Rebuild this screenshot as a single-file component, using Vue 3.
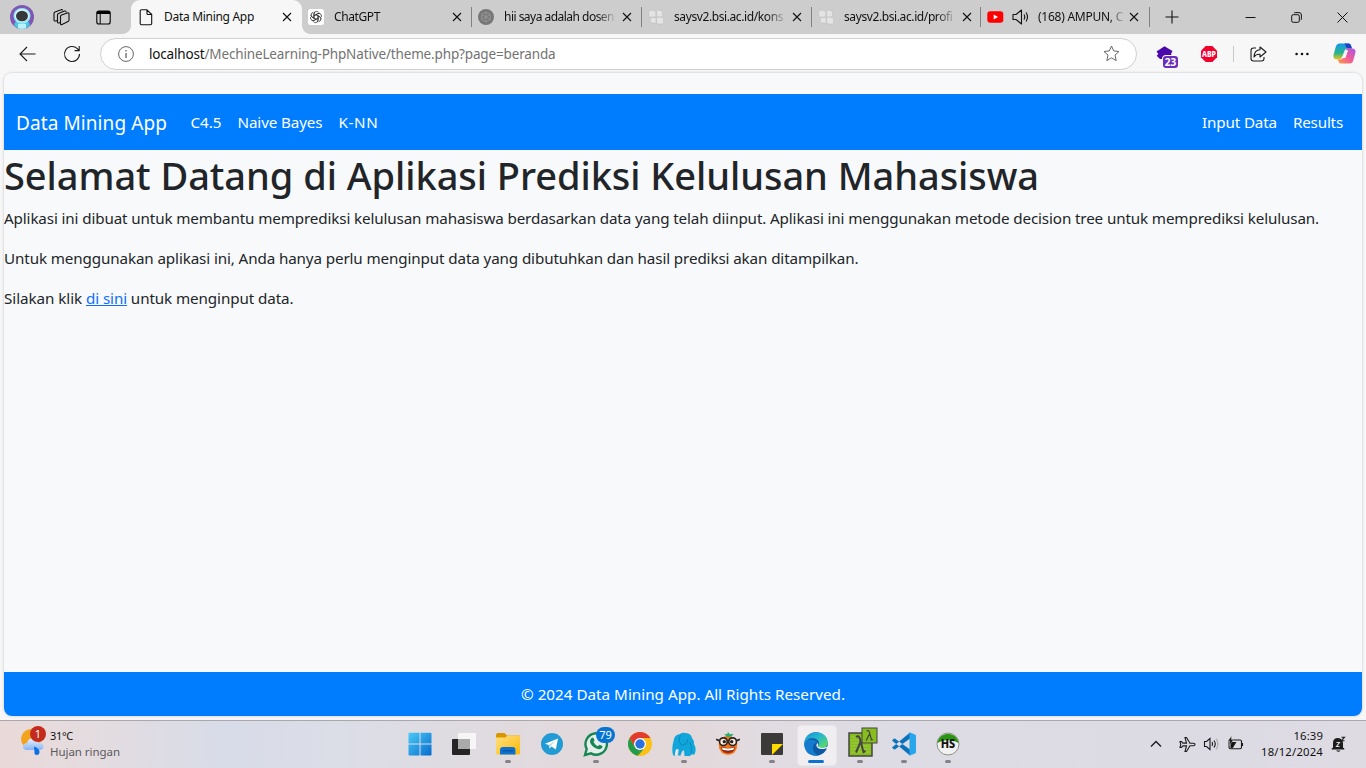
<script setup>
const tabs = [
  { id: 'gpt', title: 'ChatGPT', icon: 'gpt', width: 46 },
  { id: 'hii', title: 'hii saya adalah dosen', icon: 'dot', width: 110 },
  { id: 'kons', title: 'saysv2.bsi.ac.id/kons', icon: 'bsi', width: 109 },
  { id: 'prof', title: 'saysv2.bsi.ac.id/profi', icon: 'bsi', width: 108.5 },
  { id: 'yt', title: '(168) AMPUN, C', icon: 'yt', width: 85 },
]
const apps = [
  { id: 'start' }, { id: 'desktops' }, { id: 'files', run: true }, { id: 'telegram' },
  { id: 'whatsapp', run: true, badge: '79' }, { id: 'chrome' }, { id: 'mamp', run: true },
  { id: 'orange' }, { id: 'notes', run: true }, { id: 'edge', active: true },
  { id: 'cmder', run: true }, { id: 'code', run: true }, { id: 'heidi', run: true },
]

// Distributes letter spacing so that a label occupies the given width.
const vFit = {
  mounted(el, { value }) {
    const now = el.getBoundingClientRect().width
    el.style.letterSpacing = `${(value - now) / el.textContent.length}px`
  },
}
</script>

<template>
  <div class="screen">
    <header class="tabbar">
      <div class="tools">
        <svg class="avatar" width="24" height="24" viewBox="0 0 24 24">
          <circle cx="12" cy="12" r="12" fill="#7e57b5" />
          <path d="M4 20q1-5 8-5t8 5q-3 4-8 4t-8-4z" fill="#4cc3df" />
          <ellipse cx="12" cy="11" rx="8.5" ry="8" fill="#8fe6f5" />
          <ellipse cx="12" cy="10.5" rx="7.3" ry="6.5" fill="#d5f6fb" />
          <ellipse cx="12" cy="11" rx="6" ry="5.2" fill="#37383b" />
          <path d="M8 19h8v4.300q-4 1-8 0z" fill="#b8f2fa" />
        </svg>
        <svg class="i-ws" width="17" height="17" viewBox="0 0 17 17" fill="none" stroke="#111" stroke-width="1.100" stroke-linejoin="round">
          <path d="M8.500 6 14.500 4q1.500-.4 1.500 1v6q0 1-1 1.500l-6 3q-1.500.6-1.500-1V7.500q0-1 1-1.500z" />
          <path d="M7.500 13.500l-1.500.5q-1.500.3-1.500-1V6q0-1 1-1.500L11.500 2q1.500-.4 1.700 1.500" />
          <path d="M4.500 11.500 3 12q-2 .3-2-1V4.500q0-1 1-1.500L8 .8q1-.4 1.700.5" />
        </svg>
        <svg class="i-side" width="15" height="15" viewBox="0 0 15 15" fill="none" stroke="#000" stroke-width="1.100">
          <rect x=".8" y="1" width="13.400" height="13" rx="2" /><path d="M1 2.500h13" stroke-width="3" /><path d="M4.200 4v10" stroke-width="1" />
        </svg>
      </div>
      <div class="tab active">
        <svg class="i-page" width="14" height="17" viewBox="0 0 14 17" fill="none" stroke="#111" stroke-width="1.100" stroke-linejoin="round"><path d="M2.500.8H8l4.700 4.700v9q0 1.200-1.200 1.200h-9Q1.200 15.700 1.200 14.500V2Q1.200.8 2.500.8zM8 1v3.500q0 1 1 1h3.500" /></svg>
        <div class="ttl"><span v-fit="90">Data Mining App</span></div>
        <svg class="x" width="10" height="10" viewBox="0 0 10 10"><path d="M1 1l8 8M9 1 1 9" /></svg>
      </div>
      <div v-for="t in tabs" :key="t.id" class="tab" :class="[t.id, t.icon, { plain: t.id === 'gpt' }]">
        <svg v-if="t.icon === 'gpt'" class="fav" width="16" height="16" viewBox="0 0 16 16">
          <rect width="16" height="16" rx="2.500" fill="#fff" />
          <g fill="none" stroke="#333" stroke-width=".8">
            <path v-for="a in [0, 60, 120, 180, 240, 300]" :key="a" :transform="`rotate(${a} 8 8)`" d="M6 9.300V5.100q0-2.700 2.400-2.700 1.500 0 2.200 1M6 6.700l3.700-2.100q1.200-.5 2.200.1" />
          </g>
        </svg>
        <svg v-else-if="t.icon === 'dot'" class="fav" width="16" height="16" viewBox="0 0 16 16">
          <circle cx="8" cy="8" r="8" fill="#777" />
          <path d="M8 3l4.300 2.500v5L8 13l-4.300-2.500v-5zM3.700 5.500l8.600 5M12.300 5.500l-8.600 5M8 3v10" fill="none" stroke="#999" stroke-width=".8" />
        </svg>
        <svg v-else-if="t.icon === 'bsi'" class="fav" width="16" height="16" viewBox="0 0 16 16" fill="#e4e4e4" stroke="#b9b9b9" stroke-width=".4">
          <path d="M.5 2.500 4 1l3.800 1.500V6q0 2-2 2H2q-1 0-1-1.500zM8.500 2.500l1.500-1.500 4 1 .5 1V6q0 2-2 2H9zM2.500 10l1-1.500h3l1.500 1V14H4q-1.500 0-1.500-1.500zM8.500 9q0-.7 1-.7H14q1.500 0 1.500 1.500V14l-1 1H11q-2.500 0-2.500-2z" />
        </svg>
        <template v-else>
          <svg class="fav" width="17" height="16" viewBox="0 0 17 16"><rect y="2.200" x=".3" width="16" height="11.500" rx="3" fill="#f00" /><path d="M6.700 5.500v5l4.300-2.500z" fill="#fff" /></svg>
          <svg class="snd" width="17" height="16" viewBox="0 0 17 16" fill="none" stroke="#111" stroke-width="1.100" stroke-linejoin="round"><path d="M1 5.500h3L9.500 1v14L4 10.500H1zM12 5.500q1.500 2.500 0 5M14 3.500q3 4.500 0 9" /></svg>
        </template>
        <div class="ttl"><span v-fit="t.width">{{ t.title }}</span></div>
        <svg class="x" width="10" height="10" viewBox="0 0 10 10"><path d="M1 1l8 8M9 1 1 9" /></svg>
      </div>
      <svg class="plus" width="14" height="14" viewBox="0 0 14 14"><path d="M7 .5v13M.5 7h13" /></svg>
      <div class="wins">
        <svg width="11" height="11" viewBox="0 0 11 11"><path d="M.5 5.500h10" /></svg>
        <svg width="11" height="11" viewBox="0 0 11 11"><rect x=".7" y="2.700" width="7.600" height="7.600" rx="1.500" /><path d="M3 1q.5-.4 1.200-.4H8Q10.400.6 10.400 3v3.800q0 .8-.6 1.300" /></svg>
        <svg width="11" height="11" viewBox="0 0 11 11"><path d="M.5.500l10 10M10.500.5l-10 10" /></svg>
      </div>
    </header>

    <div class="toolbar">
      <svg class="back" width="17" height="16" viewBox="0 0 17 16"><path d="M8 1 1 8l7 7M1 8h15.500" /></svg>
      <svg class="reload" width="18" height="18" viewBox="0 0 18 18"><path d="M16.500 9A7.500 7.500 0 1 1 14.300 3.700L16 5.500M16.200 1v4.600h-4.600" /></svg>
      <div class="address">
        <svg width="16" height="16" viewBox="0 0 16 16" fill="none" stroke="#666"><circle cx="8" cy="8" r="7.400" /><path d="M8 7v5M8 4v1.600" stroke-width="1.300" /></svg>
        <div class="url"><span v-fit="55.500" class="host">localhost</span><span v-fit="351">/MechineLearning-PhpNative/theme.php?page=beranda</span></div>
        <svg class="star" width="17" height="17" viewBox="0 0 17 17" fill="none" stroke="#666" stroke-linejoin="round"><path d="M8.500 1l2.200 4.900 5.300.6-4 3.600 1.200 5.500-4.700-2.800-4.700 2.800L5 10.100 1 6.500l5.300-.6z" /></svg>
      </div>
      <div class="ext">
        <svg width="17" height="17" viewBox="0 0 17 17" fill="#4b09ac"><path d="M8.500.3 16.500 5l-1.500 3 1.300 2-3.300 3H4L.7 9.700 2.300 8 .5 5.500z" /></svg>
        <span class="count">23</span>
      </div>
      <svg class="abp" width="16" height="16" viewBox="0 0 16 16"><path d="M4.700 0h6.600L16 4.700v6.600L11.300 16H4.700L0 11.300V4.700z" fill="#f5002e" /><text x="8" y="11" text-anchor="middle" textLength="14" lengthAdjust="spacingAndGlyphs">ABP</text></svg>
      <i class="vline"></i>
      <svg class="share" width="17" height="16" viewBox="0 0 17 16"><path d="M6 2H3.500Q1 2 1 4.500v8Q1 15 3.500 15h8q2.500 0 2.500-2.500V11M10 1l6 5-6 5V8.300Q6 8 4 11q.3-7 6-7.300z" /></svg>
      <svg class="dots" width="14" height="4" viewBox="0 0 14 4"><circle cx="1.600" cy="2" r="1.300" /><circle cx="7" cy="2" r="1.300" /><circle cx="12.400" cy="2" r="1.300" /></svg>
      <svg class="copilot" width="23" height="21" viewBox="0 0 23 21">
        <defs>
          <linearGradient id="cpA" x1="0" y1="0" x2="0" y2="1"><stop stop-color="#1597ef" /><stop offset=".6" stop-color="#28b58b" /><stop offset="1" stop-color="#f1c318" /></linearGradient>
          <linearGradient id="cpB" x1="1" y1="0" x2="0" y2="1"><stop stop-color="#a756e8" /><stop offset=".5" stop-color="#f15a9b" /><stop offset="1" stop-color="#ff9a42" /></linearGradient>
        </defs>
        <path d="M6 .5h9.500q2 0 2.500 2l.8 3h-4.500q-2 0-2.700 2L9 14.300q-.7 2.200-3 2.200H3Q0 16 .5 12L3 3Q4 .5 6 .5z" fill="url(#cpA)" />
        <path d="M11.500.5h4q2 0 2.500 2l1 3h-5z" fill="#1d42c6" />
        <path d="M17 20.500H8q-2 0-2.500-2l-.6-2h2.600q2 0 2.700-2.300l2-6.500q.7-2.200 3-2.200h4q3.800.3 3.300 4l-2.300 8Q19.500 20.500 17 20.500z" fill="url(#cpB)" />
        <path d="M12.600 7l2.400.3-2.500 7.500-3 .5z" fill="#fff" />
      </svg>
    </div>

    <main class="page">
      <nav class="navbar">
        <a class="brand"><span v-fit="151">Data Mining App</span></a>
        <a><span v-fit="31">C4.5</span></a>
        <a><span v-fit="85">Naive Bayes</span></a>
        <a><span v-fit="40">K-NN</span></a>
        <a class="right"><span v-fit="75">Input Data</span></a>
        <a><span v-fit="50">Results</span></a>
      </nav>
      <section>
        <h1><span v-fit="1035">Selamat Datang di Aplikasi Prediksi Kelulusan Mahasiswa</span></h1>
        <p><span v-fit="1315">Aplikasi ini dibuat untuk membantu memprediksi kelulusan mahasiswa berdasarkan data yang telah diinput. Aplikasi ini menggunakan metode decision tree untuk memprediksi kelulusan.</span></p>
        <p><span v-fit="854.500">Untuk menggunakan aplikasi ini, Anda hanya perlu menginput data yang dibutuhkan dan hasil prediksi akan ditampilkan.</span></p>
        <p class="pre"><span v-fit="82">Silakan klik </span><a v-fit="41" class="link">di sini</a><span v-fit="166.500"> untuk menginput data.</span></p>
      </section>
      <footer><span v-fit="324">© 2024 Data Mining App. All Rights Reserved.</span></footer>
    </main>

    <div class="taskbar">
      <div class="weather">
        <div class="wicon">
          <svg width="24" height="29" viewBox="0 0 24 29">
            <defs><linearGradient id="cl" x1="0" y1="0" x2="0" y2="1"><stop stop-color="#e7f0fc" /><stop offset="1" stop-color="#86b4f5" /></linearGradient></defs>
            <circle cx="10" cy="12" r="10" fill="#f3a31d" />
            <path d="M5 23q-3-.5-3-3.500T6 16q1-5 6-4.500 4 .3 5 4 5-.5 5.500 3.500.2 3.500-3.500 4z" fill="url(#cl)" />
            <path d="M13 19.500q5.500 2 5.500 5.500 0 3-2.700 3t-2.300-3z" fill="#0a72e8" />
          </svg>
          <span class="one">1</span>
        </div>
        <div class="wtext"><div><span v-fit="23">31°C</span></div><div class="sub"><span v-fit="70">Hujan ringan</span></div></div>
      </div>
      <div class="apps">
        <div v-for="a in apps" :key="a.id" class="app" :class="{ on: a.active }">
          <svg v-if="a.id === 'start'" width="24" height="24" viewBox="0 0 24 24"><defs><linearGradient id="win" x1="0" y1="0" x2="24" y2="24" gradientUnits="userSpaceOnUse"><stop stop-color="#4ccdf9" /><stop offset="1" stop-color="#0569cc" /></linearGradient></defs><path d="M.5 1.500q0-.7.700-.7H11.500V11.600H.5zM12.500.8h10.200q.8 0 .8.700v10.100h-11zM.5 12.600h11v11H1.200q-.7 0-.7-.8zM12.500 12.600h11v10.200q0 .8-.8.800H12.500z" fill="url(#win)" /></svg>
          <svg v-else-if="a.id === 'desktops'" width="24" height="24" viewBox="0 0 24 24"><rect y="7" width="18" height="16" rx="1" fill="#252525" /><rect x="6" y="1" width="18" height="16" rx="1" fill="#f6f6f6" /><path d="M6 7h12v10H6z" fill="#aaa" /></svg>
          <svg v-else-if="a.id === 'files'" width="24" height="24" viewBox="0 0 24 24"><defs><linearGradient id="fo" x1="0" y1="0" x2="1" y2="1"><stop stop-color="#ffe083" /><stop offset="1" stop-color="#fbb904" /></linearGradient></defs><path d="M0 3q0-2 2-2h6.500L11 3.500h12q1 0 1 1V8H0z" fill="#d99600" /><path d="M0 5.500h9.500l2-2H23q1 0 1 1V21q0 1.500-1.500 1.500h-21Q0 22.500 0 21z" fill="url(#fo)" /><path d="M4 22.500v-4.500q0-3 3-3h9.500q3 0 3 3v4.500z" fill="#0c70cc" /><path d="M7 18.800h10" stroke="#064f98" /></svg>
          <svg v-else-if="a.id === 'telegram'" width="24" height="24" viewBox="0 0 24 24"><circle cx="12" cy="12" r="11" fill="#229bd4" /><path d="M5 11.800 18 6.500l-2.200 11-4.300-3-2 2-.8-3.500z" fill="#fff" /><path d="M8.700 13 16 8.500l-5.500 5.500-1 2.500z" fill="#b7d9ec" /></svg>
          <svg v-else-if="a.id === 'whatsapp'" width="26" height="26" viewBox="0 0 26 26"><path d="M2 24l1.700-6A10.700 10.700 0 1 1 8 22.400z" fill="#e5eeea" stroke="#168653" stroke-width="2.400" /><path d="M8.500 7q2-1.500 3 2.500l-1 1.500q1.500 3 4.500 4.200l1.500-1.500q4 1.300 2.800 2.800-1.800 3.200-6.500.8T7 11Q6.800 8.500 8.500 7z" fill="#168653" /></svg>
          <svg v-else-if="a.id === 'chrome'" width="24" height="24" viewBox="0 0 24 24"><circle cx="12" cy="12" r="12" fill="#fbc116" /><path d="M1.600 6A12 12 0 0 1 22.400 6H12L6.800 15z" fill="#e33b2e" /><path d="M1.600 6 6.800 15 12 18l-2 5.800A12 12 0 0 1 1.600 6z" fill="#229a4b" /><path d="M12 18l-2 5.800 7.200-8.800z" fill="#229a4b" /><circle cx="12" cy="12" r="6" fill="#fff" /><circle cx="12" cy="12" r="4.700" fill="#2871de" /></svg>
          <svg v-else-if="a.id === 'mamp'" width="24" height="24" viewBox="0 0 24 24"><path d="M1.500 9Q2 3 8 2q2-2 6-1 5 .5 6 5 2 2 2 6 3 5 .5 10.500h-3L18 24h-5.500L12 18l-2 1.500L8.500 23.500H6l.8-6L5 17l-1.500 6.500H1.200Q-.7 17 1.500 9z" fill="#10a6dc" /><path d="M8.500 3q-3 6 1 10 5 1 6.500-6M18 10q2 5 1.500 11" stroke="#087da9" stroke-width=".7" fill="none" /><path d="M4.600 17.500l-1 5.500" stroke="#e9f8fc" stroke-width="1.500" /></svg>
          <svg v-else-if="a.id === 'orange'" width="24" height="24" viewBox="0 0 26 26"><ellipse cx="13" cy="14.500" rx="10" ry="10.500" fill="#f77716" /><path d="M9 2l3 .5L13 0l2 2.500 4-.5-2 2.500q-4 1.500-6 0z" fill="#24ac71" /><g fill="#f8ead8" stroke="#30231e" stroke-width="1.800"><circle cx="8" cy="10.500" r="4.200" /><circle cx="18" cy="10.500" r="4.200" /></g><path d="M0 8l4 1.500M26 8l-4 1.500M12 10h2" stroke="#30231e" stroke-width="1.800" /><circle cx="9" cy="10.500" r="1.800" fill="#222" /><circle cx="17" cy="10.500" r="1.800" fill="#222" /><path d="M5 16q8 2.500 16 0-1.500 7-8 7t-8-7z" fill="#8e2b1e" /><path d="M6 16.800q7 2 14 0l-1.300 2.500q-5.700 1.500-11.400 0z" fill="#fff" /></svg>
          <svg v-else-if="a.id === 'notes'" width="24" height="24" viewBox="0 0 24 24"><rect x="1" y="1" width="22" height="22" rx="1" fill="#3b3a39" /><path d="M12 12h11L12 23z" fill="#ffd900" /></svg>
          <svg v-else-if="a.id === 'edge'" width="24" height="24" viewBox="0 0 24 24"><defs><linearGradient id="ed" x1="0" y1="0" x2="1" y2="1"><stop stop-color="#1791d4" /><stop offset=".45" stop-color="#27b8cf" /><stop offset="1" stop-color="#64e34c" /></linearGradient></defs><circle cx="12" cy="12" r="11.700" fill="#0c59a5" /><path d="M.3 12Q.7 1 12 .3 23 .8 23.800 10q-.2 6-6.300 6-3.300 0-4-1.500 2-1 1.500-4-1-3.500-5.500-4.200Q3 5.500.3 12z" fill="url(#ed)" /><path d="M.3 12q2-5.500 9-4.200 3.200.8 4.500 3-4.200.1-5 4.200 0 6 5.700 8.400Q1 25 .3 12z" fill="#147ccf" /><path d="M13.800 11q-2.300 1.500-.8 4.200 3 3 8.800 1.300l2.200-.5v-1.500l-6 1.500-4.500-1.500q1.500-1.300.3-3.500z" fill="#f1eef2" /></svg>
          <svg v-else-if="a.id === 'cmder'" class="cmder" width="30" height="30" viewBox="0 0 30 30" stroke="#444" fill="#87bd1d"><rect x="1" y="6" width="23" height="23" stroke-width="1.500" /><path d="M3 10h19M3 13h19M3 16h19M3 19h19M3 22h19M3 25h19" stroke="#a7cf58" stroke-width=".8" /><path d="M8 10q3-2 4 2l3.500 13 2-1M12.500 15 8 25.500" fill="none" stroke-width="2" /><rect x="14" y="1" width="15" height="15" /><path d="M18.500 4q2-1.500 3 1.500l2 7.500 1.500-.5M21.200 7.500l-3 6" fill="none" stroke-width="1.200" /></svg>
          <svg v-else-if="a.id === 'code'" width="24" height="24" viewBox="0 0 24 24"><path d="M0 8.500 2.500 6.300 18 17.500V23.500zM0 15.500l2.500 2.200L18 6.500V.5z" fill="#0b73bb" /><path d="M17.500.2 23 2.500q1 .4 1 1.500v16q0 1-1 1.500l-5.500 2.300z" fill="#29a5ec" /></svg>
          <svg v-else width="24" height="24" viewBox="0 0 24 24"><circle cx="12" cy="12" r="11" fill="#f1f1f1" stroke="#8c9188" /><path d="M1.300 11a10.800 10.800 0 0 1 21.400 0q-5-3-10.700-3T1.300 11z" fill="#2b9413" /><text x="12" y="16.200" text-anchor="middle" textLength="14.500" lengthAdjust="spacingAndGlyphs">HS</text></svg>
          <span v-if="a.badge" class="badge">{{ a.badge }}</span>
          <i v-if="a.run" class="run"></i><i v-if="a.active" class="run cur"></i>
        </div>
      </div>
      <div class="tray">
        <svg class="chev" width="12" height="12" viewBox="0 0 12 12"><path d="M1 8.500l5-5 5 5" stroke-width="1.400" /></svg>
        <svg class="plane" width="17" height="17" viewBox="0 0 17 17"><path d="M16 8.500q0-1.200-1.500-1.300H11L7.500 1.500H6l1.500 5.600H4L2.500 5.500H1l.8 3-.8 3h1.500L4 9.900h3.500L6 15.500h1.500L11 9.800h3.500Q16 9.700 16 8.500z" /></svg>
        <svg class="vol" width="17" height="16" viewBox="0 0 17 16"><path d="M1.500 5.500h2L7 2.500v11l-3.500-3h-2zM9 6q1.200 2 0 4M11 4.500q2.500 3.500 0 7" /><path d="M13 2.500q4 5.500 0 11" stroke="#aaa" /></svg>
        <svg class="bat" width="17" height="16" viewBox="0 0 17 16"><rect x="2" y="4" width="12.500" height="8.700" rx="1.500" /><path d="M4 6.500h4.500l-3 5H4zM15.500 7v3" fill="#111" /><path d="M4.500 0 1 5h2L2 9.500 6.500 4h-2z" fill="#111" stroke="#dddbe4" stroke-width=".4" /></svg>
        <div class="clock"><div><span v-fit="29.500">16:39</span></div><div><span v-fit="62">18/12/2024</span></div></div>
        <svg class="bell" width="15" height="17" viewBox="0 0 15 17"><path d="M2 11.500V7q0-5 5-5 4.500.5 5 5v4.500l1.300 1v1H.7v-1zM5 14.500h4.500q-2 2.500-4.500 0z" fill="#1b1b1b" stroke="none" /><path d="M5.500 6.500h3l-3 4h3" stroke="#ddd" /><path d="M10.500 1.200h3l-3 3.500h3" stroke="#1b1b1b" stroke-width="1.100" /></svg>
      </div>
    </div>
  </div>
</template>

<style>
body { margin: 0; overflow: hidden; }
</style>

<style scoped>
* { box-sizing: border-box; }
.screen { width: 1366px; height: 768px; display: flex; flex-direction: column; background: #f7f7f7; font-family: "Noto Sans", "Open Sans", sans-serif; color: #111; overflow: hidden; }
svg { display: block; flex: none; }
span { white-space: nowrap; }
.tabbar { height: 34px; flex: none; display: flex; background: #cdcdcd; }
.tools { width: 131px; display: flex; align-items: center; }
.avatar { margin-left: 10px; }
.i-ws { margin-left: 19px; }
.i-side { margin-left: 26px; }
.tab { position: relative; width: 170px; height: 34px; display: flex; align-items: center; padding-left: 7px; font-size: 12px; color: #111; }
.tab::before { content: ''; position: absolute; left: 0; top: 7px; width: 1px; height: 20px; background: #828282; }
.tab.plain::before, .tab.active::before { display: none; }
.tab.plain { width: 169px; padding-left: 6px; }
.tab.prof { width: 169px; }
.tab.yt { padding-left: 7px; width: 169px; }
.tab.active { width: 171px; padding-left: 8px; background: #f7f7f7; border-radius: 9px 9px 0 0; }
.tab.active::after { content: ''; position: absolute; left: -8px; right: -8px; bottom: 0; height: 8px; background: radial-gradient(circle at 0 0, transparent 7.5px, #f7f7f7 8px) left / 8px 8px no-repeat, radial-gradient(circle at 100% 0, transparent 7.5px, #f7f7f7 8px) right / 8px 8px no-repeat; }
.tab.active .ttl { margin-left: 11px; width: 110px; mask-image: none; }
.tab.active .x { margin-left: 8px; }
.ttl { width: 110px; margin-left: 10px; line-height: 18px; white-space: nowrap; mask-image: linear-gradient(to right, #000 84%, rgba(0, 0, 0, .15)); }
.yt .ttl { width: 85px; margin-left: 9px; }
.tab.yt .x { margin-left: 6px; }
.ttl span { display: inline-block; }
.snd { margin-left: 8px; }
.x { margin-left: 7.5px; fill: none; stroke: #111; stroke-width: 1.1; }
.plus { align-self: center; margin-left: 16px; fill: none; stroke: #111; stroke-width: 1.1; }
.tab.yt::after { content: ''; position: absolute; right: -1px; top: 7px; width: 1px; height: 20px; background: #828282; }
.wins { margin-left: auto; display: flex; align-items: center; gap: 35px; padding-right: 18px; fill: none; stroke: #111; stroke-width: 1; }
.toolbar { height: 39px; flex: none; display: flex; align-items: center; fill: none; stroke: #1b1b1b; stroke-width: 1.1; }
.back { margin-left: 19px; }
.reload { margin-left: 27px; }
.address { width: 1037px; height: 32px; margin-left: 19px; background: #fff; border: 1px solid #d0d0d0; border-radius: 16px; display: flex; align-items: center; padding: 0 16px 0 17px; font-size: 13.5px; color: #737373; stroke-width: 1; }
.url { margin-left: 15px; display: flex; }
.host { color: #111; }
.star { margin-left: auto; }
.ext { position: relative; width: 24px; height: 26px; margin-left: 19px; padding: 5px 0 0 0; stroke: none; }
.count { position: absolute; left: 7px; top: 15px; width: 15px; height: 12px; border-radius: 3px; background: #6b2fba; color: #fff; font-size: 10px; line-height: 12px; font-weight: 700; text-align: center; box-shadow: 0 0 0 1px #f7f7f7; }
.abp { margin-left: 21px; stroke: none; }
.abp text { fill: #fff; font-size: 8.5px; font-weight: 800; }
.vline { width: 1px; height: 16px; background: #c8c8c8; margin-left: 16px; }
.share { margin-left: 16px; stroke-linejoin: round; }
.dots { margin-left: 28px; fill: #111; stroke: none; }
.copilot { margin-left: 24px; stroke: none; }
.page { width: 1358px; height: 643px; flex: none; margin-left: 4px; padding-top: 21px; display: flex; flex-direction: column; background: #f8f9fa; border-radius: 8px; overflow: hidden; box-shadow: 0 0 2px 1px #dedede; color: #212529; font-size: 15.2px; }
.navbar { height: 56px; display: flex; align-items: center; padding: 0 11px 0 12px; background: #007dff; color: #fff; }
.navbar a { padding: 0 8px; line-height: 24px; }
.navbar .brand { padding: 1px 0 0; margin-right: 15.5px; font-size: 19px; }
.navbar .right { margin-left: auto; }
section { flex: 1; }
h1 { margin: 0 0 8px; height: 48px; line-height: 51px; font-size: 38px; font-weight: 500; }
p { margin: 0 0 16px; line-height: 24px; height: 24px; }
.pre { display: flex; }
.pre span { white-space: pre; }
.link { color: #0d6efd; text-decoration: underline; white-space: nowrap; }
footer { height: 44px; background: #007dff; color: #fff; display: flex; align-items: center; justify-content: center; }
.taskbar { position: relative; height: 48px; margin-top: 4px; display: flex; border-top: 1px solid #aaa8ad; background: linear-gradient(90deg, #ead9d9 0, #e4dcdf 90px, #d8dce8 220px, #dbdde7 340px, #dedce2 430px, #e2d9dc 580px, #e3d8da 680px, #e0dce1 770px, #dddbe4 900px, #dcdae3 1200px, #dedbe3 1366px); }
.weather { width: 398px; display: flex; padding: 7px 0 0 21px; }
.wicon { position: relative; width: 24px; }
.wicon svg { margin-top: -1px; }
.one { position: absolute; left: 9px; top: -2px; width: 16px; height: 16px; border-radius: 8px; background: #c42b1c; color: #fff; font-size: 11px; line-height: 16px; text-align: center; }
.wtext { margin-left: 5px; font-size: 11px; line-height: 16px; }
.sub { color: #5b595c; font-size: 11.5px; }
.apps { display: flex; }
.app { position: relative; width: 44px; height: 46px; display: flex; align-items: center; justify-content: center; }
.app svg { position: relative; z-index: 1; }
.app.on::before { content: ''; position: absolute; left: 3px; top: 4px; width: 38px; height: 39px; border-radius: 4px; background: #f1eef2; border: 1px solid #e8e5ea; }
.app .cmder { margin: -5px 0 0 5px; }
.app text { font: 800 12px "Noto Sans", sans-serif; fill: #111; }
.run { position: absolute; z-index: 2; left: 19px; bottom: 4px; width: 6px; height: 3px; border-radius: 2px; background: #858287; }
.run.cur { left: 14px; width: 16px; background: #0a73d0; }
.badge { position: absolute; z-index: 2; left: 22px; top: 6px; width: 19px; height: 16px; border-radius: 8px; background: #0874d1; color: #fff; font-size: 11px; line-height: 16px; text-align: center; }
.tray { margin-left: auto; display: flex; align-items: center; height: 46px; padding-right: 20px; fill: none; stroke: #1b1b1b; stroke-width: 1.1; }
.plane { margin-left: 17px; }
.vol { margin-left: 7px; }
.bat { margin-left: 7px; }
.clock { width: 79px; text-align: right; font-size: 11.3px; line-height: 16px; margin-top: -1px; }
.bell { margin-left: 8px; }
</style>
